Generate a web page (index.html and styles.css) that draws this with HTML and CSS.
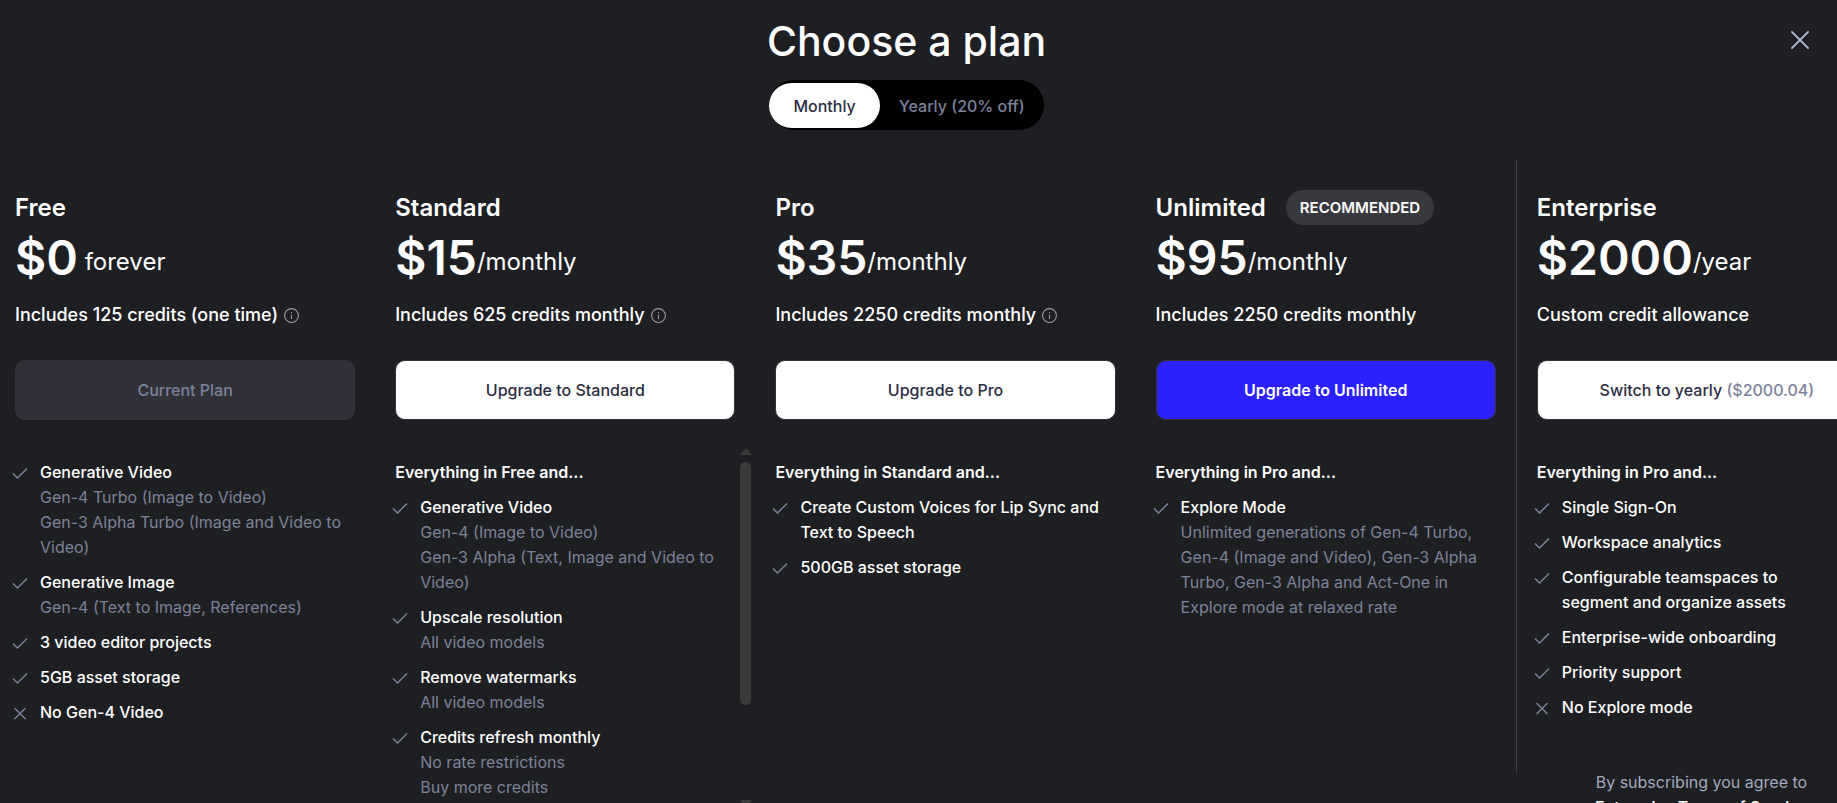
FILE: index.html
```
<!DOCTYPE html>
<html lang="en">
<head>
    <meta charset="UTF-8">
    <meta name="viewport" content="width=device-width, initial-scale=1.0">
    <title>Choose a plan</title>
    <link rel="stylesheet" href="styles.css">
</head>
<body>
    <svg class="sprite" aria-hidden="true">
        <symbol id="check" viewBox="0 0 20 20"><path d="M3 10.5l4.5 4.5L17 5.5"/></symbol>
        <symbol id="cross" viewBox="0 0 20 20"><path d="M4.5 5l11 11M15.5 5l-11 11"/></symbol>
        <symbol id="info" viewBox="0 0 16 16"><circle cx="8" cy="8" r="6.5"/><path d="M8 7.3v4M8 4.6v1.3"/></symbol>
    </svg>

    <header class="header">
        <h1>Choose a plan</h1>
        <div class="toggle">
            <button class="toggle-btn active">Monthly</button>
            <button class="toggle-btn">Yearly (20% off)</button>
        </div>
        <button class="close" aria-label="Close">
            <svg viewBox="0 0 20 20"><path d="M2 2l16 16M18 2L2 18"/></svg>
        </button>
    </header>

    <main class="plans">
        <section class="plan">
            <h2>Free</h2>
            <p class="price"><strong>$0</strong> forever</p>
            <p class="credits">Includes 125 credits (one time) <svg class="info"><use href="#info"/></svg></p>
            <button class="btn" disabled>Current Plan</button>
            <ul class="features">
                <li><svg><use href="#check"/></svg><div>Generative Video
                    <p>Gen-4 Turbo (Image to Video)</p>
                    <p>Gen-3 Alpha Turbo (Image and Video to Video)</p></div></li>
                <li><svg><use href="#check"/></svg><div>Generative Image
                    <p>Gen-4 (Text to Image, References)</p></div></li>
                <li><svg><use href="#check"/></svg><div>3 video editor projects</div></li>
                <li><svg><use href="#check"/></svg><div>5GB asset storage</div></li>
                <li><svg><use href="#cross"/></svg><div>No Gen-4 Video</div></li>
            </ul>
        </section>

        <section class="plan scrollable">
            <h2>Standard</h2>
            <p class="price"><strong>$15</strong>/monthly</p>
            <p class="credits">Includes 625 credits monthly <svg class="info"><use href="#info"/></svg></p>
            <button class="btn">Upgrade to Standard</button>
            <h3>Everything in Free and...</h3>
            <ul class="features">
                <li><svg><use href="#check"/></svg><div>Generative Video
                    <p>Gen-4 (Image to Video)</p>
                    <p>Gen-3 Alpha (Text, Image and Video to Video)</p></div></li>
                <li><svg><use href="#check"/></svg><div>Upscale resolution
                    <p>All video models</p></div></li>
                <li><svg><use href="#check"/></svg><div>Remove watermarks
                    <p>All video models</p></div></li>
                <li><svg><use href="#check"/></svg><div>Credits refresh monthly
                    <p>No rate restrictions</p>
                    <p>Buy more credits</p></div></li>
            </ul>
            <div class="scrollbar">
                <span class="arrow-up"></span>
                <span class="thumb"></span>
                <span class="arrow-down"></span>
            </div>
        </section>

        <section class="plan">
            <h2>Pro</h2>
            <p class="price"><strong>$35</strong>/monthly</p>
            <p class="credits">Includes 2250 credits monthly <svg class="info"><use href="#info"/></svg></p>
            <button class="btn">Upgrade to Pro</button>
            <h3>Everything in Standard and...</h3>
            <ul class="features">
                <li><svg><use href="#check"/></svg><div>Create Custom Voices for Lip Sync and Text to Speech</div></li>
                <li><svg><use href="#check"/></svg><div>500GB asset storage</div></li>
            </ul>
        </section>

        <section class="plan">
            <h2>Unlimited <span class="badge">RECOMMENDED</span></h2>
            <p class="price"><strong>$95</strong>/monthly</p>
            <p class="credits">Includes 2250 credits monthly</p>
            <button class="btn primary">Upgrade to Unlimited</button>
            <h3>Everything in Pro and...</h3>
            <ul class="features">
                <li><svg><use href="#check"/></svg><div>Explore Mode
                    <p>Unlimited generations of Gen-4 Turbo, Gen-4 (Image and Video), Gen-3 Alpha Turbo, Gen-3 Alpha and Act-One in Explore mode at relaxed rate</p></div></li>
            </ul>
        </section>

        <div class="enterprise">
            <section class="plan">
                <h2>Enterprise</h2>
                <p class="price"><strong>$2000</strong>/year</p>
                <p class="credits">Custom credit allowance</p>
                <button class="btn">Switch to yearly <span>($2000.04)</span></button>
                <h3>Everything in Pro and...</h3>
                <ul class="features">
                    <li><svg><use href="#check"/></svg><div>Single Sign-On</div></li>
                    <li><svg><use href="#check"/></svg><div>Workspace analytics</div></li>
                    <li><svg><use href="#check"/></svg><div>Configurable teamspaces to segment and organize assets</div></li>
                    <li><svg><use href="#check"/></svg><div>Enterprise-wide onboarding</div></li>
                    <li><svg><use href="#check"/></svg><div>Priority support</div></li>
                    <li><svg><use href="#cross"/></svg><div>No Explore mode</div></li>
                </ul>
            </section>
            <p class="terms">By subscribing you agree to<br><a href="#">Enterprise Terms of Service</a></p>
        </div>
    </main>
</body>
</html>
```
FILE: styles.css
```
* {
    box-sizing: border-box;
}
body {
    margin: 0;
    height: 100vh;
    overflow: hidden;
    background-color: #1e1f23;
    color: #fff;
    font-family: Inter, "Liberation Sans", sans-serif;
    font-size: 16px;
    line-height: 25px;
}
h1, h2, h3, p, ul {
    margin: 0;
    padding: 0;
}
button {
    border: none;
    font-family: inherit;
    font-size: 16px;
    font-weight: 500;
    cursor: pointer;
}
svg {
    fill: none;
    stroke: currentColor;
}
.sprite {
    display: none;
}
.header {
    position: relative;
    display: flex;
    flex-direction: column;
    align-items: center;
    gap: 11px;
    height: 160px;
    padding: 13px 24px 0 0;
}
h1 {
    font-size: 41px;
    font-weight: 500;
    line-height: 56px;
}
.toggle {
    display: flex;
    padding: 3px 0 2px;
    border-radius: 25px;
    background-color: #000;
}
.toggle-btn {
    height: 45px;
    padding: 0 19px;
    border-radius: 23px;
    background-color: transparent;
    color: #7c8299;
}
.toggle-btn.active {
    padding: 0 24px;
    background-color: #fff;
    color: #2b2d42;
}
.close {
    position: absolute;
    top: 30px;
    right: 27px;
    padding: 0;
    width: 20px;
    height: 20px;
    background: none;
    color: #a9b3cc;
}
.close svg {
    display: block;
    stroke-width: 2;
    stroke-linecap: round;
}
.plans {
    display: flex;
    gap: 40px;
    padding-left: 15px;
}
.plan {
    flex: none;
    width: 18.52vw;
    min-height: 613px;
    padding-top: 30px;
}
.plan h2 {
    display: flex;
    align-items: center;
    gap: 20px;
    height: 35px;
    font-size: 24px;
    font-weight: 600;
}
.badge {
    padding: 5px 14px;
    border-radius: 18px;
    background-color: #38393e;
    font-size: 15px;
}
.price {
    height: 60px;
    margin-top: 3px;
    font-size: 24px;
    line-height: 60px;
}
.price strong {
    font-size: 48px;
    font-weight: 600;
    vertical-align: -5px;
}
.credits {
    display: flex;
    align-items: center;
    gap: 5px;
    margin-top: 14px;
    font-size: 18px;
    font-weight: 500;
    line-height: 26px;
}
.info {
    width: 17px;
    height: 17px;
    color: #9a9ca8;
}
.btn {
    width: 100%;
    height: 60px;
    margin: 32px 0 40px;
    border: 1px solid #33343b;
    border-radius: 10px;
    background-color: #fff;
    color: #2b2d42;
}
.btn:disabled {
    background-color: #303139;
    color: #7c8299;
}
.btn.primary {
    background-color: #2b20ff;
    color: #fff;
    font-weight: 600;
}
.btn span {
    color: #7c8299;
}
.plan h3 {
    margin-bottom: 10px;
    font-size: 16px;
    font-weight: 600;
}
.features {
    display: flex;
    flex-direction: column;
    gap: 10px;
    margin-left: -5px;
    list-style: none;
    font-weight: 500;
}
.features li {
    display: flex;
    gap: 10px;
    padding-right: 10px;
}
.features svg {
    flex: none;
    width: 20px;
    height: 20px;
    margin-top: 3px;
    color: #7c8299;
    stroke-width: 1.5;
}
.features p {
    color: #7c8299;
    font-weight: 400;
}
.scrollable {
    position: relative;
}
.scrollable .features li {
    padding-right: 20px;
}
.scrollbar {
    position: absolute;
    top: 288px;
    right: -16px;
    display: flex;
    flex-direction: column;
    align-items: center;
    width: 11px;
}
.arrow-up, .arrow-down {
    border: 6px solid transparent;
    border-top: none;
    border-bottom: 7px solid #3a3a3a;
}
.arrow-down {
    border-top: 7px solid #3a3a3a;
    border-bottom: none;
}
.thumb {
    width: 11px;
    height: 243px;
    margin: 7px 0 95px;
    border-radius: 6px;
    background-color: #3a3a3a;
}
.enterprise {
    flex: none;
    margin-left: -20px;
}
.enterprise .plan {
    width: calc(18.52vw + 21px);
    padding-left: 20px;
    border-left: 1px solid #3d3e43;
}
.enterprise .features li {
    padding-right: 40px;
}
.terms {
    margin-top: -3px;
    padding: 0 10px 0 20px;
    color: #a2a9bd;
    text-align: center;
}
.terms a {
    color: #fff;
    font-weight: 500;
    text-decoration: none;
}
```
